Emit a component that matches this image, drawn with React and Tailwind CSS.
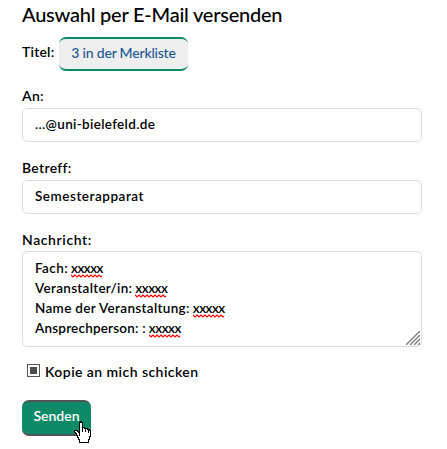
const lines = [
  { label: 'Fach:', tracking: 'tracking-[0.4px]' },
  { label: 'Veranstalter/in:', tracking: 'tracking-[0.3px]' },
  { label: 'Name der Veranstaltung:', tracking: 'tracking-[0.33px]' },
  { label: 'Ansprechperson: :', tracking: 'tracking-[0.2px]' },
];

const Misspelled = ({ children }) => (
  <span className="relative inline-block w-[32px] tracking-[-0.5px]">
    {children}
    <svg className="absolute left-0 top-[16px] w-[31px] h-[4px]" viewBox="0 0 31 4" fill="none" stroke="#f00000" strokeWidth="1.2">
      <path d="M0 1l2 2 2-2 2 2 2-2 2 2 2-2 2 2 2-2 2 2 2-2 2 2 2-2 2 2 2-2 2 2 1-1" />
    </svg>
  </span>
);

const TextField = ({ label, value, tracking }) => (
  <label className="block h-[72px]">
    <span className="block h-[21px] leading-[18px] text-[14px] tracking-[0.3px]">{label}</span>
    <span className={`flex items-center h-[34px] px-3 pb-px border border-[#dcdcdc] rounded-[5px] text-[13.5px] ${tracking}`}>
      {value}
    </span>
  </label>
);

const HandCursor = () => (
  <svg className="absolute left-[52px] top-[21px] w-[17px] h-[23px]" viewBox="0 0 17 23" shapeRendering="crispEdges">
    <path
      d="M5.5 14.5V1.5H6.5V.5H7.5V1.5H8.5V6.5H10.5V7.5H13.5V8.5H15.5V9.5H16.5V15.5H15.5V18.5H14.5V21.5H5.5V18.5H4.5V16.5H3.5V14.5H2.5V12.5H1.5V11.5H.5V9.5H3.5V10.5H4.5V11.5H5.5"
      fill="#fff"
      stroke="#000"
    />
    <path d="M8.5 6V11M11.5 7V11M14.5 8V12" stroke="#000" />
  </svg>
);

export default function App() {
  return (
    <div className="h-[449px] overflow-hidden bg-white pl-[22px] pr-[25px] pt-[2px] font-['Lato',sans-serif] font-semibold text-black">
      <h1 className="h-[35px] text-[20px] leading-[24px] font-medium whitespace-nowrap tracking-[-0.23px]">
        Auswahl per E-Mail versenden
      </h1>
      <div className="flex h-[49px]">
        <span className="w-[37px] shrink-0 pt-[5px] text-[14px] leading-[20px] tracking-[0.2px]">Titel:</span>
        <button className="flex items-center justify-center w-[129px] h-[34px] pb-[3px] border-y-2 border-[#0e8a68] rounded-[7px] bg-[#efefef] text-[14px] font-medium tracking-[-0.2px] text-[#1d5795] whitespace-nowrap">
          3 in der Merkliste
        </button>
      </div>

      <div className="pt-px">
        <TextField label="An:" value="...@uni-bielefeld.de" tracking="tracking-[0.33px]" />
        <TextField label="Betreff:" value="Semesterapparat" tracking="tracking-[0.53px]" />
      </div>

      <div className="h-[20px] text-[14px] leading-[17px] tracking-[0.6px]">Nachricht:</div>
      <div className="relative h-[96px] px-3 pt-[6px] border border-[#dcdcdc] rounded-[5px] text-[13.5px] leading-[20px]">
        {lines.map((line) => (
          <div key={line.label} className="flex gap-[3px] whitespace-nowrap">
            <span className={line.tracking}>{line.label}</span>
            <Misspelled>xxxxx</Misspelled>
          </div>
        ))}
        <svg className="absolute right-[1px] bottom-[1px] w-[14px] h-[14px]" viewBox="0 0 14 14" stroke="#777" strokeWidth="1.3">
          <path d="M0 14L14 0M4 14L14 4M8 14L14 8M12 14L14 12" />
        </svg>
      </div>

      <label className="flex items-center h-[20px] mt-[14px] pl-[5px] text-[14px] tracking-[0.44px]">
        <span className="w-[13px] h-[13px] p-[2px] mr-[5px] border border-[#555] -mt-px">
          <span className="block w-[7px] h-[7px] bg-[#4d4d4d]" />
        </span>
        Kopie an mich schicken
      </label>

      <div className="relative mt-[19px]">
        <button className="flex items-center justify-center w-[69px] h-[36px] pb-[5px] border-y-2 border-[#4f5552] rounded-[7px] bg-[#0e8a68] text-[14px] text-white">
          Senden
        </button>
        <HandCursor />
      </div>
    </div>
  );
}
